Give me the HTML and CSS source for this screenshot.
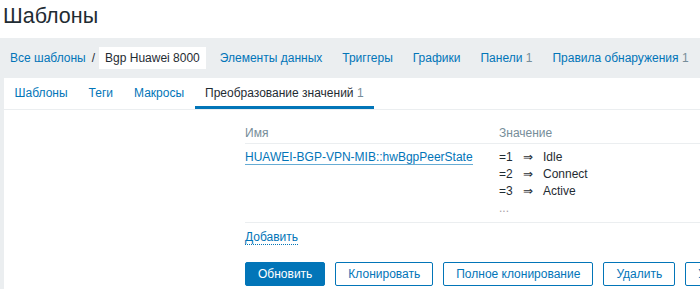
FILE: index.html
```html
<!DOCTYPE html>
<html lang="ru">
<head>
    <meta charset="UTF-8">
    <meta name="viewport" content="width=device-width, initial-scale=1.0">
    <title>Шаблоны</title>
    <link rel="stylesheet" href="styles.css">
</head>
<body>
    <header class="page-head">
        <h1>Шаблоны</h1>
    </header>
    <div class="wrapper">
        <nav class="obj-nav">
            <a href="#" class="crumb">Все шаблоны</a>
            <span class="sep">/</span>
            <span class="crumb-current">Bgp Huawei 8000</span>
            <ul>
                <li><a href="#">Элементы данных</a></li>
                <li><a href="#">Триггеры</a></li>
                <li><a href="#">Графики</a></li>
                <li><a href="#">Панели</a> <sup>1</sup></li>
                <li><a href="#">Правила обнаружения</a> <sup>1</sup></li>
            </ul>
        </nav>
        <main class="panel">
            <ul class="tabs">
                <li><a href="#">Шаблоны</a></li>
                <li><a href="#">Теги</a></li>
                <li><a href="#">Макросы</a></li>
                <li class="active"><a href="#">Преобразование значений <sup>1</sup></a></li>
            </ul>
            <form class="form">
                <div class="form-row">
                    <div class="label"></div>
                    <div class="field">
                        <table class="valuemaps">
                            <thead>
                                <tr><th class="col-name">Имя</th><th>Значение</th></tr>
                            </thead>
                            <tbody>
                                <tr>
                                    <td><a href="#" class="link">HUAWEI-BGP-VPN-MIB::hwBgpPeerState</a></td>
                                    <td>
                                        <div class="map"><span>=1</span><span>⇒</span><span>Idle</span></div>
                                        <div class="map"><span>=2</span><span>⇒</span><span>Connect</span></div>
                                        <div class="map"><span>=3</span><span>⇒</span><span>Active</span></div>
                                        <div class="more">...</div>
                                    </td>
                                </tr>
                            </tbody>
                        </table>
                        <a href="#" class="link-action">Добавить</a>
                    </div>
                </div>
                <div class="form-row">
                    <div class="label"></div>
                    <div class="buttons">
                        <button type="button" class="btn primary">Обновить</button>
                        <button type="button" class="btn">Клонировать</button>
                        <button type="button" class="btn">Полное клонирование</button>
                        <button type="button" class="btn">Удалить</button>
                        <button type="button" class="btn">Удалить и очистить</button>
                    </div>
                </div>
            </form>
        </main>
    </div>
</body>
</html>
```
FILE: styles.css
```css
/* reset */
* {box-sizing: border-box;}
body, h1, ul, table {margin: 0; padding: 0;}
li {list-style: none;}
a {text-decoration: none; color: #0275b8;}
body {font-family: "Liberation Sans", Arial, sans-serif; font-size: 12px; color: #1f2c33;
    background: #ebeef0; overflow: hidden;}
sup {vertical-align: baseline; font-size: 12px; color: #768d99;}

/* title */
.page-head {height: 38px; padding: 3px 0 0 3px; background: #fff;}
.page-head h1 {font-size: 21.5px; font-weight: normal; line-height: 26px;}

/* object nav (breadcrumbs + links) */
.wrapper {width: 1000px;}
.obj-nav {display: flex; align-items: center; height: 40px; padding-left: 10px;}
.obj-nav .sep {margin: 0 4px 0 6px; color: #1f2c33;}
.crumb-current {height: 22px; line-height: 22px; padding: 0 6px; background: #fff;}
.obj-nav ul {display: flex; gap: 20px; margin-left: 14px;}

/* tabs panel */
.panel {margin-left: 4px; background: #fff; height: 300px;}
.tabs {display: flex; border-bottom: 1px solid #ebeef0;}
.tabs a {display: block; height: 31px; line-height: 30px; padding: 0 10.5px;
    border-bottom: 3px solid transparent;}
.tabs .active a {color: #1f2c33; border-bottom-color: #0275b8;}

/* form */
.form {padding-top: 13px;}
.form-row {display: grid; grid-template-columns: 231px 1fr; column-gap: 10px;}
.valuemaps {width: 100%; border-collapse: collapse;}
.valuemaps th {padding: 3px 0; line-height: 14px; text-align: left; font-weight: normal;
    color: #768d99; border-bottom: 1px solid #ebeef0;}
.valuemaps .col-name {width: 254px;}
.valuemaps td {padding: 5px 0; line-height: 17px; vertical-align: top;
    border-bottom: 1px solid #ebeef0;}
.link {border-bottom: 1px solid rgba(2, 117, 184, .6);}
.map {display: grid; grid-template-columns: 24px 20px auto;}
.more {color: #a8a0a6; line-height: 17px;}
.link-action {display: inline-block; margin-top: 7px; line-height: 14px;
    border-bottom: 1px dotted #0275b8;}

/* buttons */
.buttons {display: flex; gap: 10px; margin-top: 17px;}
.btn {height: 24px; padding: 0 12px; border: 1px solid #0275b8; border-radius: 2px;
    background: #fff; color: #0275b8; font: 12px "Liberation Sans", Arial, sans-serif;
    white-space: nowrap;}
.btn.primary {background: #0275b8; color: #fff;}
```
